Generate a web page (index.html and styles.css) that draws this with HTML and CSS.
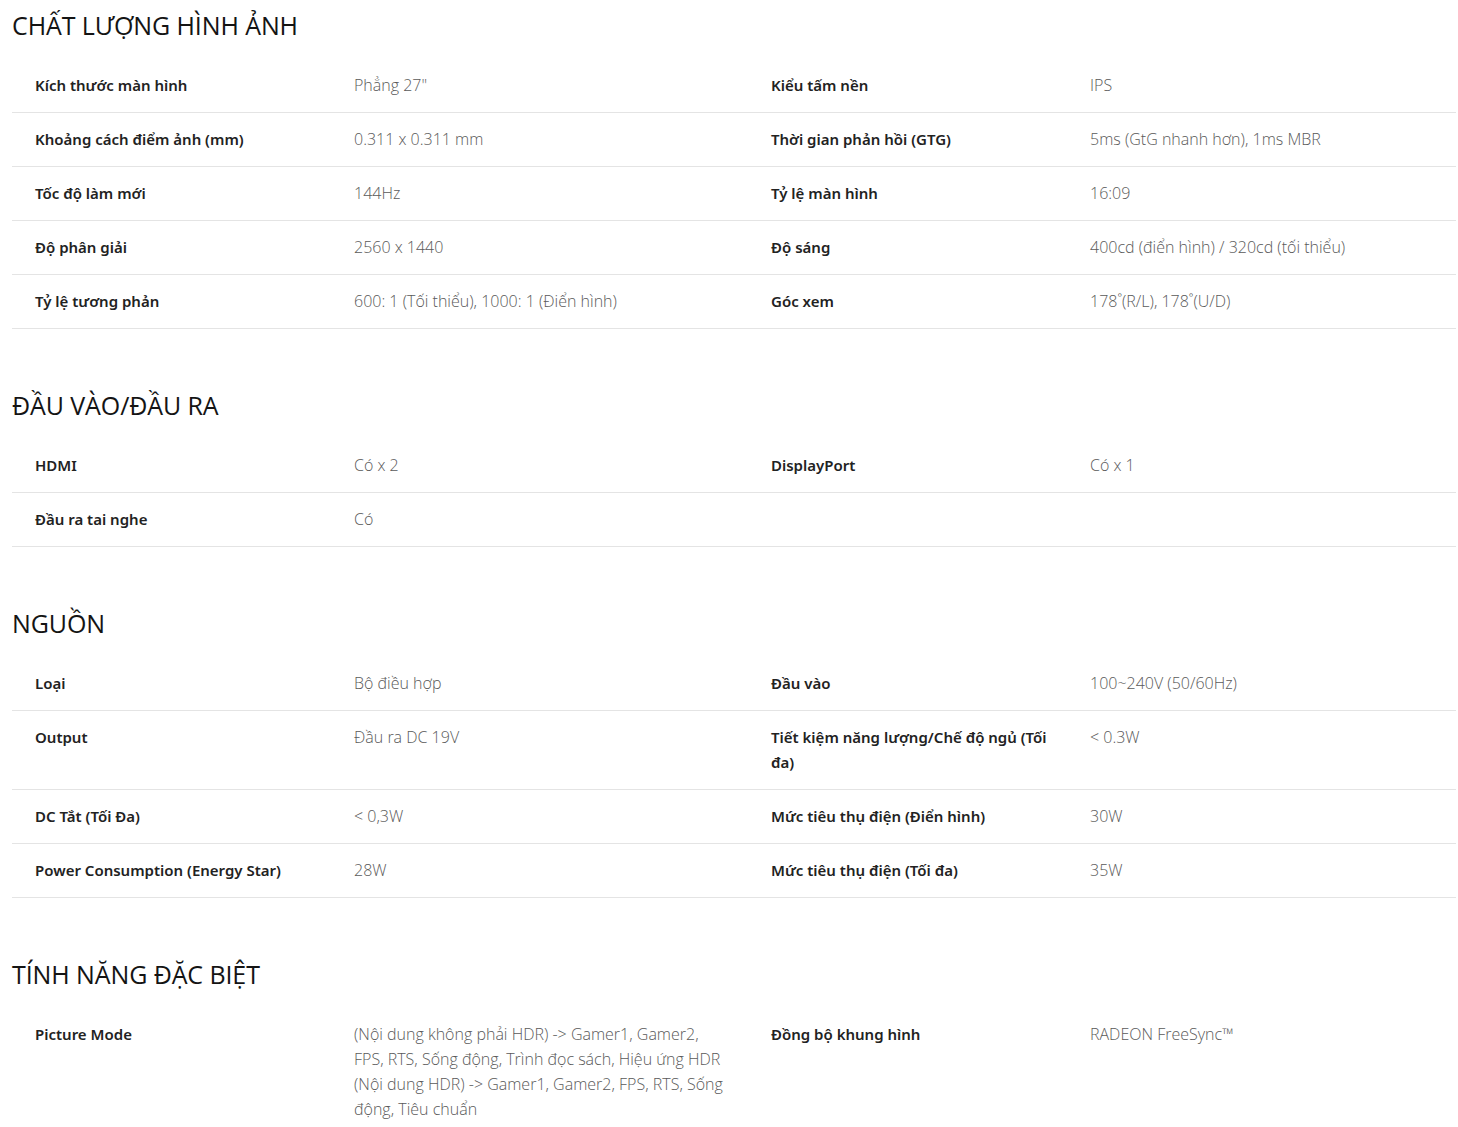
FILE: index.html
```html
<!DOCTYPE html>
<html lang="vi">
<head>
<meta charset="utf-8">
<title>Thông số kỹ thuật</title>
<link rel="stylesheet" href="styles.css">
</head>
<body>
<div class="specs">
  <section class="spec-section">
    <h2 class="spec-title">CHẤT LƯỢNG HÌNH ẢNH</h2>
    <div class="spec-row">
      <div class="spec-label">Kích thước màn hình</div><div class="spec-value">Phẳng 27"</div>
      <div class="spec-label">Kiểu tấm nền</div><div class="spec-value">IPS</div>
    </div>
    <div class="spec-row">
      <div class="spec-label">Khoảng cách điểm ảnh (mm)</div><div class="spec-value">0.311 x 0.311 mm</div>
      <div class="spec-label">Thời gian phản hồi (GTG)</div><div class="spec-value">5ms (GtG nhanh hơn), 1ms MBR</div>
    </div>
    <div class="spec-row">
      <div class="spec-label">Tốc độ làm mới</div><div class="spec-value">144Hz</div>
      <div class="spec-label">Tỷ lệ màn hình</div><div class="spec-value">16:09</div>
    </div>
    <div class="spec-row">
      <div class="spec-label">Độ phân giải</div><div class="spec-value">2560 x 1440</div>
      <div class="spec-label">Độ sáng</div><div class="spec-value">400cd (điển hình) / 320cd (tối thiểu)</div>
    </div>
    <div class="spec-row">
      <div class="spec-label">Tỷ lệ tương phản</div><div class="spec-value">600: 1 (Tối thiểu), 1000: 1 (Điển hình)</div>
      <div class="spec-label">Góc xem</div><div class="spec-value">178˚(R/L), 178˚(U/D)</div>
    </div>
  </section>

  <section class="spec-section">
    <h2 class="spec-title">ĐẦU VÀO/ĐẦU RA</h2>
    <div class="spec-row">
      <div class="spec-label">HDMI</div><div class="spec-value">Có x 2</div>
      <div class="spec-label">DisplayPort</div><div class="spec-value">Có x 1</div>
    </div>
    <div class="spec-row">
      <div class="spec-label">Đầu ra tai nghe</div><div class="spec-value">Có</div>
      <div class="spec-label"></div><div class="spec-value"></div>
    </div>
  </section>

  <section class="spec-section">
    <h2 class="spec-title">NGUỒN</h2>
    <div class="spec-row">
      <div class="spec-label">Loại</div><div class="spec-value">Bộ điều hợp</div>
      <div class="spec-label">Đầu vào</div><div class="spec-value">100~240V (50/60Hz)</div>
    </div>
    <div class="spec-row">
      <div class="spec-label">Output</div><div class="spec-value">Đầu ra DC 19V</div>
      <div class="spec-label">Tiết kiệm năng lượng/Chế độ ngủ (Tối đa)</div><div class="spec-value">&lt; 0.3W</div>
    </div>
    <div class="spec-row">
      <div class="spec-label">DC Tắt (Tối Đa)</div><div class="spec-value">&lt; 0,3W</div>
      <div class="spec-label">Mức tiêu thụ điện (Điển hình)</div><div class="spec-value">30W</div>
    </div>
    <div class="spec-row">
      <div class="spec-label">Power Consumption (Energy Star)</div><div class="spec-value">28W</div>
      <div class="spec-label">Mức tiêu thụ điện (Tối đa)</div><div class="spec-value">35W</div>
    </div>
  </section>

  <section class="spec-section">
    <h2 class="spec-title">TÍNH NĂNG ĐẶC BIỆT</h2>
    <div class="spec-row spec-row-last">
      <div class="spec-label">Picture Mode</div><div class="spec-value">(Nội dung không phải HDR) -&gt; Gamer1, Gamer2, FPS, RTS, Sống động, Trình đọc sách, Hiệu ứng HDR (Nội dung HDR) -&gt; Gamer1, Gamer2, FPS, RTS, Sống động, Tiêu chuẩn</div>
      <div class="spec-label">Đồng bộ khung hình</div><div class="spec-value">RADEON FreeSync™</div>
    </div>
  </section>
</div>
</body>
</html>
```

FILE: styles.css
```css
html, body {
  margin: 0;
  padding: 0;
  background: #ffffff;
}

.specs {
  padding: 9px 2px 0 12px;
  display: flex;
  flex-direction: column;
  gap: 60px;
}

.spec-title {
  margin: 0 0 18px 0;
  font-family: "Open Sans", "Noto Sans", sans-serif;
  font-weight: 400;
  font-size: 25px;
  line-height: 32px;
  color: #141414;
  letter-spacing: -0.1px;
}

.spec-row {
  display: grid;
  grid-template-columns: 342px 394px 342px 1fr;
  border-bottom: 1px solid #e4e4e4;
}

.spec-row-last {
  border-bottom: none;
}

.spec-label,
.spec-value {
  padding: 14px 0;
  line-height: 25px;
}

.spec-label {
  padding-left: 23px;
  padding-right: 30px;
  font-family: "Noto Sans", "Open Sans", sans-serif;
  font-size: 15px;
  font-weight: 600;
  color: #222222;
}

.spec-value {
  padding-right: 24px;
  font-family: "Open Sans", "Noto Sans", sans-serif;
  font-size: 16px;
  font-weight: 300;
  color: #5a5a5a;
}
```
